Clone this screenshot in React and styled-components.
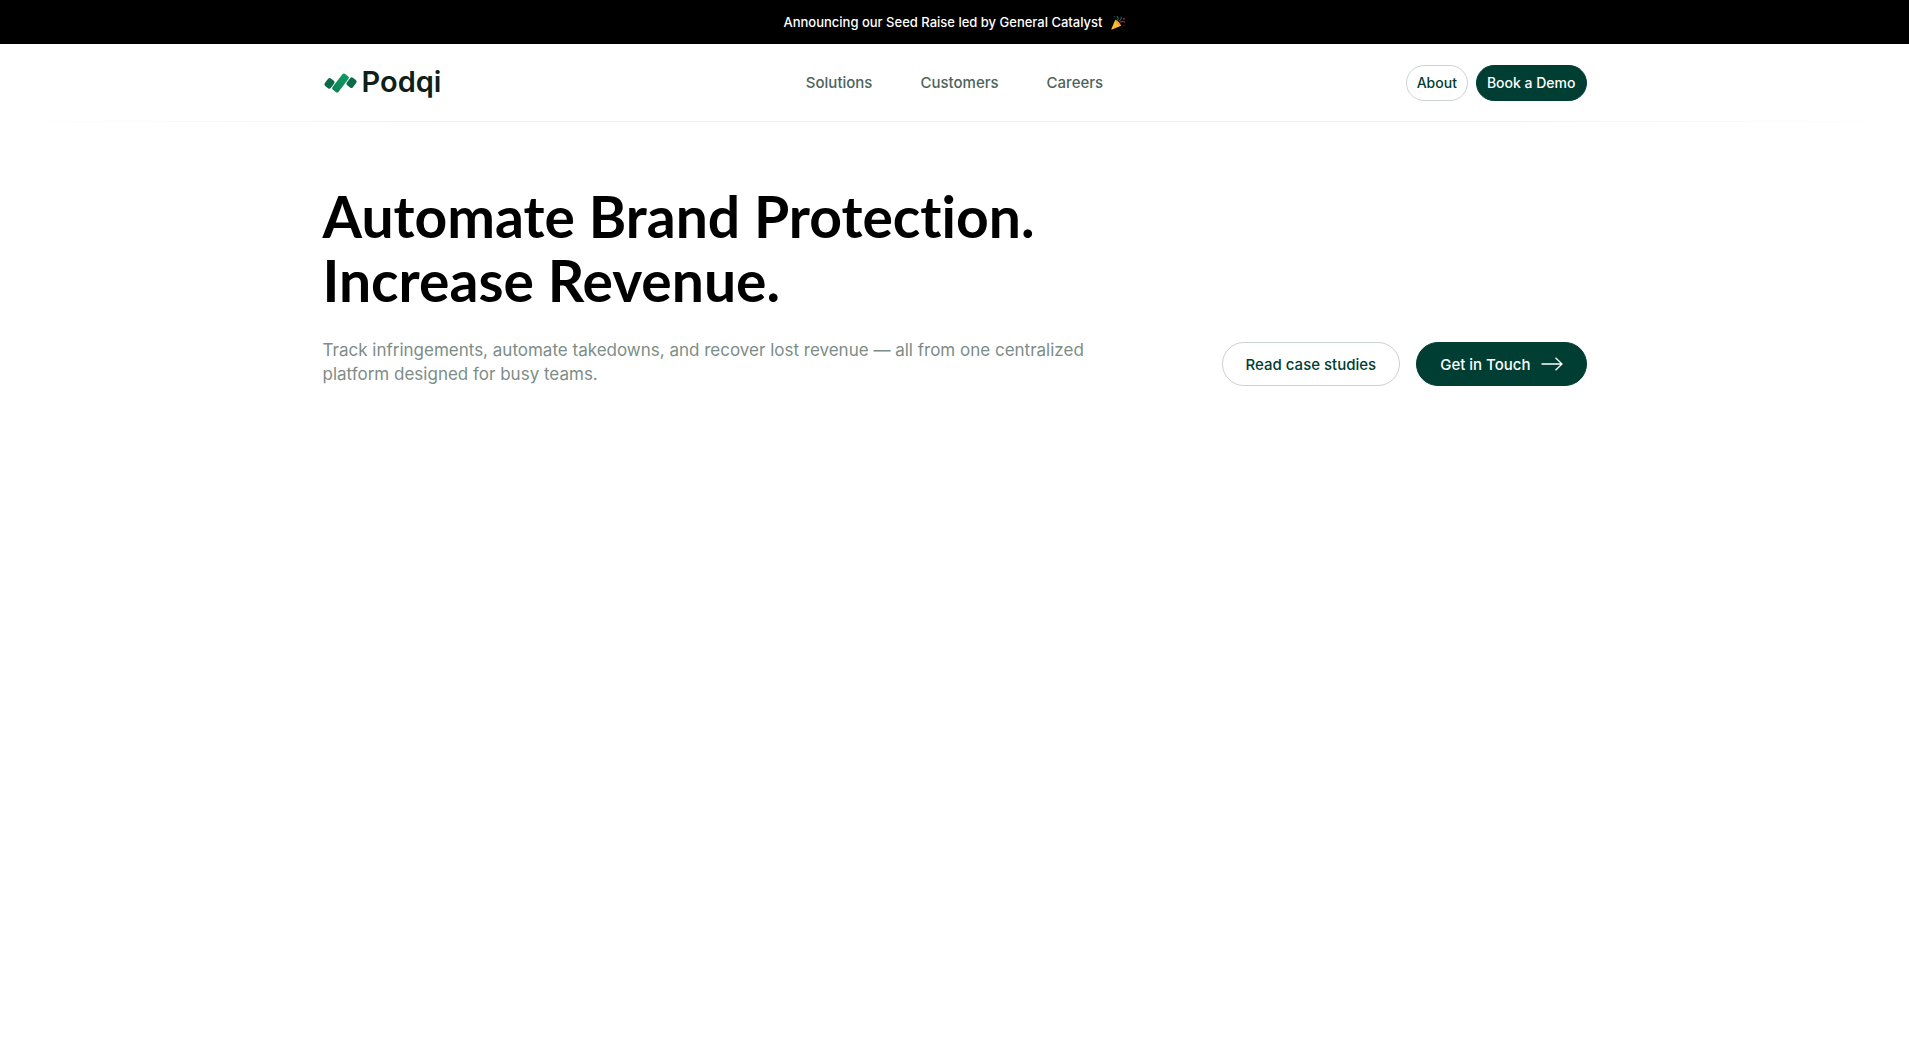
import styled, { createGlobalStyle } from 'styled-components';

export default function App() {
    return (
        <>
            <GlobalStyle />
            <Banner href='#seed'>
                <span>Announcing our Seed Raise led by General Catalyst</span>
                <PartyPopper />
            </Banner>
            <Header>
                <HeaderInner>
                    <Logo href='#home'>
                        <LogoMark />
                        <span>Podqi</span>
                    </Logo>
                    <Nav>
                        <a href='#solutions'>Solutions</a>
                        <a href='#customers'>Customers</a>
                        <a href='#careers'>Careers</a>
                    </Nav>
                    <HeaderActions>
                        <Button>About</Button>
                        <Button $primary>Book a Demo</Button>
                    </HeaderActions>
                </HeaderInner>
            </Header>
            <Hero>
                <Title>
                    Automate Brand Protection.
                    <br />
                    Increase Revenue.
                </Title>
                <HeroRow>
                    <Lead>
                        Track infringements, automate takedowns, and recover lost revenue — all from one centralized platform designed for busy teams.
                    </Lead>
                    <HeroActions>
                        <Button $large>Read case studies</Button>
                        <Button $large $primary>
                            Get in Touch
                            <Arrow />
                        </Button>
                    </HeroActions>
                </HeroRow>
            </Hero>
        </>
    )
}

function LogoMark() {
    return (
        <svg width='35' height='22' viewBox='0 0 105 66' aria-hidden='true'>
            <defs>
                <linearGradient id='bar' x1='0' y1='0' x2='0' y2='1'>
                    <stop offset='0' stopColor='#0f9a66' />
                    <stop offset='1' stopColor='#0d8256' />
                </linearGradient>
            </defs>
            <rect x='8' y='20' width='23' height='28' rx='6' fill='#0b6b49' transform='rotate(38 19.5 34)' />
            <rect x='41' y='3' width='23' height='60' rx='6' fill='url(#bar)' transform='rotate(38 52.5 33)' />
            <rect x='74' y='18' width='23' height='28' rx='6' fill='#0b6b49' transform='rotate(38 85.5 32)' />
        </svg>
    )
}

function PartyPopper() {
    return (
        <svg width='15' height='15' viewBox='0 0 28 28' aria-hidden='true'>
            <path d='M8 9 L19 20 L2 27 Q0 28 1 25 Z' fill='#fbb92f' />
            <path d='M8 9 Q15 11 19 20 Q10 19 8 9 Z' fill='#e9a23a' />
            <path d='M12 10 Q15 6 11 2' fill='none' stroke='#176e68' strokeWidth='2' />
            <path d='M17 14 Q22 10 26 14' fill='none' stroke='#8a2a40' strokeWidth='2' />
            <path d='M15 11 Q20 9 19 3' fill='none' stroke='#175a7c' strokeWidth='2' />
            <circle cx='24' cy='7' r='2' fill='#8a2a40' />
            <circle cx='7' cy='3' r='1' fill='#176e68' />
            <circle cx='24' cy='20' r='1' fill='#8a2a40' />
        </svg>
    )
}

function Arrow() {
    return (
        <svg width='22' height='14' viewBox='0 0 22 14' fill='none' stroke='currentColor' strokeWidth='1.3' aria-hidden='true'>
            <path d='M0.5 7H21M14.5 0.7L21 7L14.5 13.3' />
        </svg>
    )
}

const GlobalStyle = createGlobalStyle`
    * {
        box-sizing: border-box;
    }

    body {
        margin: 0;
        background: #FFFFFF;
        font-family: Inter, 'Liberation Sans', sans-serif;
    }

    a {
        color: inherit;
        text-decoration: none;
    }
`

const Banner = styled.a`
    display: flex;
    align-items: center;
    justify-content: center;
    gap: 8px;
    height: 44px;
    background: #000000;
    font-size: 13px;
    font-weight: 500;

    span {
        color: #FFFFFF;
    }
`

const Header = styled.header`
    padding: 0 24px;
    border-bottom: 1px solid;
    border-image: linear-gradient(90deg, #FFFFFF 0%, #EDEFEE 25%, #EDEFEE 75%, #FFFFFF 100%) 1;
`

const HeaderInner = styled.div`
    display: grid;
    grid-template-columns: 1fr auto 1fr;
    align-items: center;
    max-width: 1264px;
    height: 77px;
    margin: 0 auto;
`

const Logo = styled.a`
    display: flex;
    align-items: center;
    gap: 4px;
    font-size: 29px;
    line-height: 32px;
    font-weight: 600;
    color: #0F1F1A;

    span {
        padding-bottom: 2px;
    }
`

const Nav = styled.nav`
    display: flex;
    gap: 48px;
    font-size: 15px;
    font-weight: 500;
    color: #4D635C;
`

const HeaderActions = styled.div`
    display: flex;
    justify-content: flex-end;
    gap: 8px;
`

const Button = styled.button`
    display: inline-flex;
    align-items: center;
    justify-content: center;
    gap: 10px;
    height: ${props => props.$large ? '44px' : '36px'};
    padding: ${props => props.$large ? '0 23px' : '0 10px'};
    border: 1px solid ${props => props.$primary ? '#003D33' : '#CCD2D0'};
    border-radius: 22px;
    background: ${props => props.$primary ? '#003D33' : '#FFFFFF'};
    color: ${props => props.$primary ? '#FFFFFF' : '#003D33'};
    font-family: inherit;
    font-size: ${props => props.$large ? '15px' : '14px'};
    font-weight: 500;
    white-space: nowrap;
    cursor: pointer;
`

const Hero = styled.main`
    max-width: 1264px;
    margin: 0 auto;
    padding: 62px 0;
`

const Title = styled.h1`
    margin: 0 0 26px;
    font-family: Lato, sans-serif;
    font-size: 57px;
    line-height: 64px;
    font-weight: 700;
    font-variant-ligatures: none;
    color: #000000;
`

const HeroRow = styled.div`
    display: flex;
    align-items: flex-end;
    justify-content: space-between;
`

const Lead = styled.p`
    max-width: 780px;
    margin: 0;
    font-size: 17px;
    line-height: 24px;
    color: #7C8D88;
`

const HeroActions = styled.div`
    display: flex;
    gap: 16px;
`
